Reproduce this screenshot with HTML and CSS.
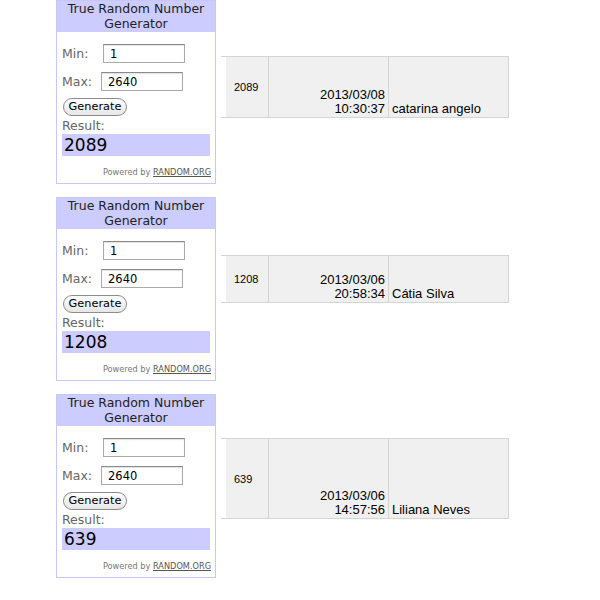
FILE: index.html
```html
<!DOCTYPE html>
<html>
<head>
<meta charset="utf-8">
<link rel="stylesheet" href="styles.css">
</head>
<body>
<div class="page">
  <div class="section">
    <div class="widget">
      <div class="w-head">True Random Number<br>Generator</div>
      <div class="w-body">
        <div class="field"><span class="lbl lbl-min">Min:</span><span class="input">1</span></div>
        <div class="field field-max"><span class="lbl lbl-max">Max:</span><span class="input">2640</span></div>
        <div class="btn">Generate</div>
        <div class="res-lbl">Result:</div>
        <div class="res">2089</div>
        <div class="powered">Powered by <u>RANDOM.ORG</u></div>
      </div>
    </div>
    <div class="row row1">
      <div class="spacer"></div>
      <div class="c c-num">2089</div>
      <div class="c c-date">2013/03/08<br>10:30:37</div>
      <div class="c c-name">catarina angelo</div>
    </div>
  </div>

  <div class="section">
    <div class="widget">
      <div class="w-head">True Random Number<br>Generator</div>
      <div class="w-body">
        <div class="field"><span class="lbl lbl-min">Min:</span><span class="input">1</span></div>
        <div class="field field-max"><span class="lbl lbl-max">Max:</span><span class="input">2640</span></div>
        <div class="btn">Generate</div>
        <div class="res-lbl">Result:</div>
        <div class="res">1208</div>
        <div class="powered">Powered by <u>RANDOM.ORG</u></div>
      </div>
    </div>
    <div class="row row2">
      <div class="spacer"></div>
      <div class="c c-num">1208</div>
      <div class="c c-date">2013/03/06<br>20:58:34</div>
      <div class="c c-name">Cátia Silva</div>
    </div>
  </div>

  <div class="section">
    <div class="widget">
      <div class="w-head">True Random Number<br>Generator</div>
      <div class="w-body">
        <div class="field"><span class="lbl lbl-min">Min:</span><span class="input">1</span></div>
        <div class="field field-max"><span class="lbl lbl-max">Max:</span><span class="input">2640</span></div>
        <div class="btn">Generate</div>
        <div class="res-lbl">Result:</div>
        <div class="res">639</div>
        <div class="powered">Powered by <u>RANDOM.ORG</u></div>
      </div>
    </div>
    <div class="row row3">
      <div class="spacer"></div>
      <div class="c c-num">639</div>
      <div class="c c-date">2013/03/06<br>14:57:56</div>
      <div class="c c-name">Liliana Neves</div>
    </div>
  </div>
</div>
</body>
</html>
```

FILE: styles.css
```css
html, body {
  margin: 0;
  padding: 0;
  background: #fff;
}
.page {
  padding-left: 56px;
  display: flex;
  flex-direction: column;
  gap: 13px;
}
.section {
  display: flex;
  align-items: flex-start;
}
.widget {
  width: 158px;
  height: 182px;
  border: 1px solid #c8c8f8;
  font-family: "DejaVu Sans", Verdana, sans-serif;
  flex: none;
}
.w-head {
  height: 31px;
  background: #ccccff;
  color: #222;
  font-size: 12.5px;
  line-height: 15px;
  text-align: center;
}
.w-body {
  padding: 12px 4px 0 5px;
}
.field {
  display: flex;
  align-items: center;
  height: 19px;
}
.field-max {
  margin-top: 9px;
}
.lbl {
  color: #666;
  font-size: 12.5px;
}
.lbl-min { width: 41px; }
.lbl-max { width: 39px; }
.input {
  width: 74px;
  height: 17px;
  border: 1px solid #a9a9a9;
  border-top-color: #8a8a8a;
  box-shadow: inset 0 1px 1px rgba(0,0,0,0.12);
  padding-left: 6px;
  font-size: 11.5px;
  line-height: 18px;
  color: #000;
}
.btn {
  margin-top: 7px;
  margin-left: 1px;
  width: 62px;
  height: 16px;
  border: 1px solid #8c8c8c;
  border-radius: 9px;
  background: linear-gradient(#ffffff, #e6e6e6);
  font-size: 11.3px;
  line-height: 16px;
  text-align: center;
  color: #000;
}
.res-lbl {
  margin-top: 2px;
  color: #666;
  font-size: 12.5px;
  line-height: 16px;
  height: 16px;
}
.res {
  width: 146px;
  height: 22px;
  background: #ccccff;
  font-size: 17px;
  line-height: 22px;
  padding-left: 2px;
  color: #000;
}
.powered {
  margin-top: 11px;
  text-align: right;
  font-size: 8.2px;
  color: #777;
}
.powered u {
  color: #555;
}
.row {
  display: flex;
  margin-left: 5px;
  border-top: 1px solid #d4d4d4;
  border-bottom: 1px solid #d4d4d4;
  font-family: "Liberation Sans", Arial, sans-serif;
  color: #000;
}
.row1 { margin-top: 56px; height: 60px; }
.row2 { margin-top: 58px; height: 46px; }
.row3 { margin-top: 44px; height: 79px; }
.spacer {
  width: 5px;
  background: #fff;
}
.c {
  background: #f0f0f0;
  border-right: 1px solid #d4d4d4;
}
.c-num {
  width: 34px;
  padding-left: 8px;
  font-size: 11px;
  display: flex;
  align-items: center;
}
.c-date {
  width: 116px;
  padding-right: 3px;
  text-align: right;
  font-size: 13px;
  line-height: 14px;
  display: flex;
  flex-direction: column;
  justify-content: flex-end;
  align-items: flex-end;
  padding-bottom: 1px;
}
.c-name {
  width: 116px;
  padding-left: 3px;
  font-size: 13px;
  line-height: 14px;
  display: flex;
  align-items: flex-end;
  padding-bottom: 1px;
}
```
